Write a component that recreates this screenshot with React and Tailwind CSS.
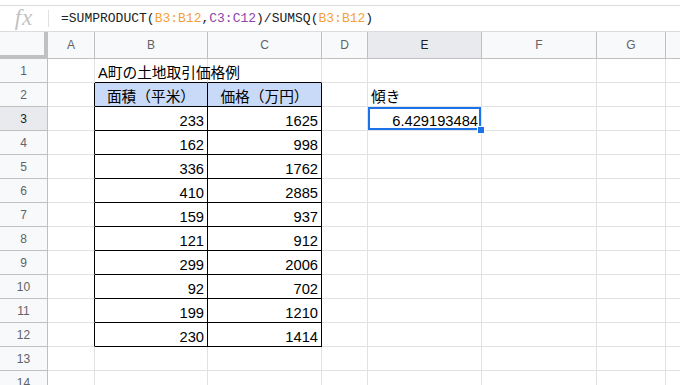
import React from 'react';

const colW = ['w-[47px]', 'w-[113px]', 'w-[114px]', 'w-[46px]', 'w-[114px]', 'w-[115px]', 'w-[69px]'];
const colNames = ['A', 'B', 'C', 'D', 'E', 'F', 'G'];

const data = {
  1: { B: { t: 'A町の土地取引価格例', a: 'left', overflow: true } },
  2: {
    B: { t: '面積（平米）', a: 'center', head: true },
    C: { t: '価格（万円）', a: 'center', head: true },
    E: { t: '傾き', a: 'left' },
  },
  3: { B: '233', C: '1625', E: { t: '6.429193484', a: 'right', sel: true } },
  4: { B: '162', C: '998' },
  5: { B: '336', C: '1762' },
  6: { B: '410', C: '2885' },
  7: { B: '159', C: '937' },
  8: { B: '121', C: '912' },
  9: { B: '299', C: '2006' },
  10: { B: '92', C: '702' },
  11: { B: '199', C: '1210' },
  12: { B: '230', C: '1414' },
  13: {},
  14: {},
};

const cellFont = { fontFamily: '"Liberation Sans", "Noto Sans CJK JP", sans-serif' };

function Cell({ row, ci }) {
  const name = colNames[ci];
  let v = data[row][name];
  if (typeof v === 'string') v = { t: v, a: 'right' };
  const inTable = row >= 2 && row <= 12;
  const isTableCol = name === 'B' || name === 'C';

  let rightBorder = 'border-r-[#e2e2e2]';
  if (inTable && (name === 'A' || isTableCol)) rightBorder = 'border-r-black';
  let bottomBorder = 'border-b-[#e2e2e2]';
  if (isTableCol && row >= 1 && row <= 12) bottomBorder = 'border-b-black';

  const align = v?.a === 'right' ? 'justify-end pr-[3px]' : v?.a === 'center' ? 'justify-center' : 'justify-start pl-[3px]';
  const visible = v?.overflow || v?.sel;

  return (
    <div
      className={`relative ${colW[ci]} shrink-0 h-[24px] border-r border-b ${rightBorder} ${bottomBorder} flex items-end ${align} ${v?.head ? 'bg-[#c9daf8]' : ''} ${visible ? 'overflow-visible z-10' : 'overflow-hidden'}`}
    >
      {v && (
        <span className="text-[14.7px] leading-[18px] text-black whitespace-nowrap" style={cellFont}>
          {v.t}
        </span>
      )}
      {v?.sel && (
        <>
          <div className="absolute inset-0 border-2 border-[#1a73e8]" />
          <div className="absolute -right-[4px] -bottom-[4px] w-[6px] h-[6px] bg-[#1a73e8] border border-white box-content" />
        </>
      )}
    </div>
  );
}

export default function App() {
  return (
    <div className="w-[680px] h-[385px] overflow-hidden bg-white">
      {/* formula bar */}
      <div className="mt-[5px] h-[27px] border-t border-b border-[#dadce0] flex items-center">
        <div className="w-[48px] shrink-0 flex items-center justify-center">
          <span className="italic text-[23px] leading-none text-[#c2c2c2] tracking-[1px] -mt-[2px]" style={{ fontFamily: '"Liberation Serif", serif' }}>
            fx
          </span>
        </div>
        <div className="w-px h-[17px] bg-[#e0e0e0]" />
        <div className="pl-[12px] text-[13px] text-[#202124] whitespace-nowrap" style={{ fontFamily: '"Liberation Mono", monospace' }}>
          =SUMPRODUCT(<span className="text-[#f4a13a]">B3:B12</span>,<span className="text-[#8e44ad]">C3:C12</span>)/SUMSQ(<span className="text-[#f4a13a]">B3:B12</span>)
        </div>
      </div>

      {/* column headers */}
      <div className="flex h-[27px]" style={{ fontFamily: '"Liberation Sans", sans-serif' }}>
        <div className="w-[48px] shrink-0 bg-[#f8f9fa] border-r-4 border-b-4 border-[#c0c0c0]" />
        {colNames.map((c, i) => (
          <div
            key={c}
            className={`${colW[i]} shrink-0 border-r border-b border-[#c0c0c0] flex items-center justify-center text-[12px] ${c === 'E' ? 'bg-[#e8eaed] text-[#202124]' : 'bg-[#f8f9fa] text-[#5f6368]'}`}
          >
            {c}
          </div>
        ))}
        <div className="flex-1 bg-[#f8f9fa] border-b border-[#c0c0c0]" />
      </div>

      {/* rows */}
      {Object.keys(data).map((k) => {
        const row = Number(k);
        return (
          <div key={row} className="flex">
            <div
              className={`w-[48px] shrink-0 h-[24px] border-r border-b border-[#c0c0c0] flex items-center justify-center text-[12px] ${row === 3 ? 'bg-[#e8eaed] text-[#202124]' : 'bg-[#f8f9fa] text-[#5f6368]'}`}
              style={{ fontFamily: '"Liberation Sans", sans-serif' }}
            >
              {row}
            </div>
            {colNames.map((c, i) => (
              <Cell key={c} row={row} ci={i} />
            ))}
            <div className="flex-1 h-[24px] border-b border-[#e2e2e2]" />
          </div>
        );
      })}
    </div>
  );
}
